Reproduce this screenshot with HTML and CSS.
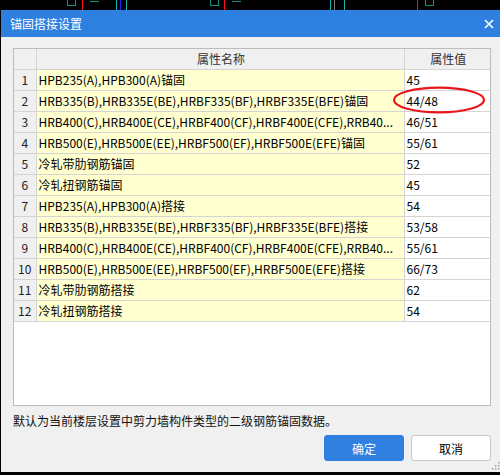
FILE: index.html
```html
<!DOCTYPE html>
<html lang="zh-CN">
<head>
<meta charset="utf-8">
<title>锚固搭接设置</title>
<link rel="stylesheet" href="styles.css">
</head>
<body>
<div class="cad">
  <span class="ln red" style="left:82px"></span>
  <span class="ln teal" style="left:116px"></span>
  <span class="ln blue" style="left:120px"></span>
  <span class="ln teal" style="left:126px"></span>
  <span class="ln red" style="left:224px"></span>
  <span class="ln teal" style="left:330px"></span>
  <span class="ln gray" style="left:334px"></span>
  <span class="ln teal" style="left:344px"></span>
  <span class="ln red" style="left:417px"></span>
  <span class="gl" style="left:67px"></span>
  <span class="dash" style="left:90px"></span>
  <span class="gl" style="left:210px"></span>
  <span class="dash" style="left:232px"></span>
  <span class="gl" style="left:425px"></span>
</div>
<div class="dialog">
  <div class="titlebar">
    <span class="title">锚固搭接设置</span>
    <svg class="close" width="10" height="10" viewBox="0 0 10 10"><path d="M1 1L9 9M9 1L1 9" stroke="#fff" stroke-width="1.6" fill="none"/></svg>
  </div>
  <div class="body">
    <div class="gridbox">
      <table class="grid">
        <colgroup><col class="c-num"><col class="c-name"><col class="c-val"></colgroup>
        <thead>
          <tr><th class="num"></th><th>属性名称</th><th class="val">属性值</th></tr>
        </thead>
        <tbody>
          <tr><td class="num">1</td><td class="name">HPB235(A),HPB300(A)锚固</td><td class="val">45</td></tr>
          <tr><td class="num">2</td><td class="name">HRB335(B),HRB335E(BE),HRBF335(BF),HRBF335E(BFE)锚固</td><td class="val">44/48</td></tr>
          <tr><td class="num">3</td><td class="name">HRB400(C),HRB400E(CE),HRBF400(CF),HRBF400E(CFE),RRB40...</td><td class="val">46/51</td></tr>
          <tr><td class="num">4</td><td class="name">HRB500(E),HRB500E(EE),HRBF500(EF),HRBF500E(EFE)锚固</td><td class="val">55/61</td></tr>
          <tr><td class="num">5</td><td class="name">冷轧带肋钢筋锚固</td><td class="val">52</td></tr>
          <tr><td class="num">6</td><td class="name">冷轧扭钢筋锚固</td><td class="val">45</td></tr>
          <tr><td class="num">7</td><td class="name">HPB235(A),HPB300(A)搭接</td><td class="val">54</td></tr>
          <tr><td class="num">8</td><td class="name">HRB335(B),HRB335E(BE),HRBF335(BF),HRBF335E(BFE)搭接</td><td class="val">53/58</td></tr>
          <tr><td class="num">9</td><td class="name">HRB400(C),HRB400E(CE),HRBF400(CF),HRBF400E(CFE),RRB40...</td><td class="val">55/61</td></tr>
          <tr><td class="num">10</td><td class="name">HRB500(E),HRB500E(EE),HRBF500(EF),HRBF500E(EFE)搭接</td><td class="val">66/73</td></tr>
          <tr><td class="num">11</td><td class="name">冷轧带肋钢筋搭接</td><td class="val">62</td></tr>
          <tr><td class="num">12</td><td class="name">冷轧扭钢筋搭接</td><td class="val">54</td></tr>
        </tbody>
      </table>
      <svg class="mark" width="94" height="28" viewBox="0 0 94 28"><ellipse cx="47" cy="14" rx="45" ry="12.3" fill="none" stroke="#e8161c" stroke-width="2.2"/></svg>
    </div>
    <p class="note">默认为当前楼层设置中剪力墙构件类型的二级钢筋锚固数据。</p>
    <div class="buttons">
      <button class="btn primary">确定</button>
      <button class="btn">取消</button>
    </div>
    <svg class="grip" width="9" height="9" viewBox="0 0 9 9" fill="#a0a0a0">
      <rect x="7" y="1" width="1.5" height="1.5"/>
      <rect x="4" y="4" width="1.5" height="1.5"/><rect x="7" y="4" width="1.5" height="1.5"/>
      <rect x="1" y="7" width="1.5" height="1.5"/><rect x="4" y="7" width="1.5" height="1.5"/><rect x="7" y="7" width="1.5" height="1.5"/>
    </svg>
  </div>
</div>
</body>
</html>
```
FILE: styles.css
```css
html, body {
  margin: 0;
  padding: 0;
}
body {
  background: #000;
  width: 500px;
  height: 475px;
  overflow: hidden;
  position: relative;
  font-family: "Noto Sans CJK SC", "Noto Sans", sans-serif;
  font-size: 12px;
  color: #000;
}
.cad {
  position: absolute;
  left: 0;
  top: 0;
  width: 500px;
  height: 10px;
}
.cad .ln {
  position: absolute;
  top: 0;
  width: 1px;
  height: 10px;
}
.cad .red { background: #ff1010; }
.cad .teal { background: #10b8b0; }
.cad .blue { background: #2020ff; }
.cad .gray { background: #808080; }
.cad .gl {
  position: absolute;
  top: 0;
  width: 7px;
  height: 5px;
  border: 1px solid #139088;
  border-top: none;
}
.cad .dash {
  position: absolute;
  top: 1px;
  width: 9px;
  height: 1px;
  background: #139088;
}
.dialog {
  margin: 10px 0 0 1px;
  width: 499px;
  height: 462px;
  display: flex;
  flex-direction: column;
  background: #f0f0f0;
  position: relative;
}
.titlebar {
  height: 27px;
  background: #2d7fe0;
  display: flex;
  align-items: center;
  justify-content: space-between;
  padding: 0 6px 0 9px;
  box-sizing: border-box;
}
.title {
  color: #fff;
  font-size: 12px;
  line-height: 16px;
}
.close {
  display: block;
}
.body {
  flex: 1;
  padding: 11px 9px 0 12px;
  display: flex;
  flex-direction: column;
}
.gridbox {
  position: relative;
  height: 358px;
  box-sizing: border-box;
  background: #fff;
  border: 1px solid #bcbcbc;
}
.grid {
  border-collapse: collapse;
  table-layout: fixed;
  width: 476px;
}
.c-num { width: 22px; }
.c-name { width: 368px; }
.c-val { width: 86px; }
.grid th, .grid td {
  height: 20px;
  padding: 0 0 0 2px;
  border-right: 1px solid #d4d4d4;
  border-bottom: 1px solid #d4d4d4;
  white-space: nowrap;
  overflow: hidden;
  line-height: 20px;
  box-sizing: border-box;
  text-align: left;
}
.grid th {
  height: 20px;
  line-height: 19px;
  background: #f0f0f0;
  color: #333;
  font-weight: normal;
  text-align: center;
}
.grid .num {
  background: #f0f0f0;
  text-align: center;
  padding: 0;
  color: #222;
}
.grid .name {
  background: #ffffd0;
}
.grid .val {
  border-right: none;
  background: #fff;
}
.grid th.val {
  background: #f0f0f0;
}
.mark {
  position: absolute;
  left: 378px;
  top: 37px;
}
.note {
  margin: 7px 0 0 0;
  line-height: 16px;
  color: #111;
}
.buttons {
  display: flex;
  justify-content: flex-end;
  gap: 7px;
  margin-top: 6px;
}
.btn {
  width: 80px;
  height: 26px;
  border: 1px solid #c8c8c8;
  border-radius: 3px;
  background: #fff;
  font-family: inherit;
  font-size: 12px;
  color: #000;
  padding: 0;
}
.btn.primary {
  background: #2f80e1;
  border-color: #2f80e1;
  color: #fff;
}
.grip {
  position: absolute;
  right: 0;
  bottom: 2px;
}
```
